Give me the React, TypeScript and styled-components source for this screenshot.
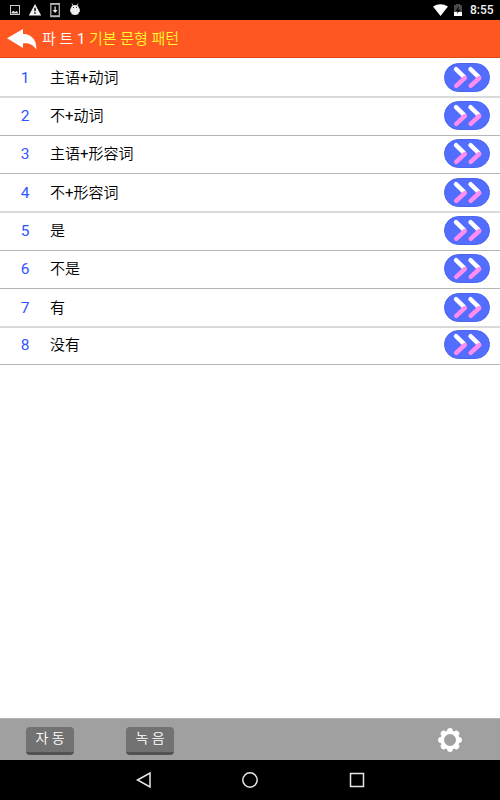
import React from 'react';
import styled, { createGlobalStyle } from 'styled-components';

const Global = createGlobalStyle`
  * { box-sizing: border-box; }
  body { margin: 0; background: #fff; }
`;

const Screen = styled.div`
  width: 500px;
  height: 800px;
  display: flex;
  flex-direction: column;
  overflow: hidden;
  background: #fff;
  font-family: Roboto, 'Noto Sans CJK KR', sans-serif;
`;

const StatusBar = styled.div`
  height: 20px;
  flex: none;
  display: flex;
  justify-content: space-between;
  background: #000;
`;

const StatusIcons = styled.svg`
  display: block;
  height: 20px;
`;

const StatusRight = styled.div`
  display: flex;
  padding-right: 6px;
`;

const Clock = styled.span`
  width: 24px;
  color: #f4f4f4;
  font-size: 12px;
  font-weight: 500;
  line-height: 21px;
  white-space: nowrap;
`;

const Header = styled.header`
  height: 38px;
  flex: none;
  display: flex;
  align-items: flex-start;
  padding-left: 6px;
  background: #ff5722;
  border-bottom: 1px solid #e04a18;
`;

const BackIcon = styled.svg`
  width: 32px;
  height: 37px;
  flex: none;
`;

const Title = styled.h1`
  margin: 0 0 0 4px;
  color: #fff;
  font-size: 15px;
  font-weight: 350;
  line-height: 39px;
  white-space: pre;
`;

const Accent = styled.span`
  color: #fff92e;
`;

const Latin = styled.span`
  font-weight: 400;
`;

const List = styled.ul`
  margin: 0;
  padding: 0;
  list-style: none;
  flex: 1;
`;

const Row = styled.li<{ $height: number; $top: number; $soft?: boolean }>`
  height: ${p => p.$height}px;
  display: flex;
  align-items: flex-start;
  padding: ${p => p.$top}px 10px 0 0;
  border-bottom: ${p => (p.$soft ? '2px solid #dadada' : '1px solid #b5b5b5')};
`;

const Num = styled.span`
  width: 50px;
  color: #3055ff;
  font-size: 15.5px;
  font-weight: 400;
  line-height: 30px;
  text-align: center;
`;

const Pattern = styled.span`
  flex: 1;
  color: #000;
  font-family: Roboto, 'Noto Sans CJK SC', sans-serif;
  font-size: 15px;
  font-weight: 350;
  line-height: 30px;
`;

const GoButton = styled.button`
  width: 46px;
  height: 29px;
  padding: 0;
  border: 1px solid #4a66ee;
  border-radius: 15px;
  background: #536dfe;
`;

const Chevrons = styled.svg`
  display: block;
  width: 44px;
  height: 27px;
`;

const Toolbar = styled.footer`
  height: 42px;
  flex: none;
  display: flex;
  align-items: flex-start;
  gap: 52px;
  padding: 8px 38px 0 26px;
  background: #a0a0a0;
  border-top: 1px solid #b4b4b4;
`;

const ToolButton = styled.button`
  width: 48px;
  height: 28px;
  padding: 0 0 3px;
  border: 0;
  border-bottom: 3px solid #525252;
  border-radius: 4px;
  background: #727272;
  color: #fff;
  font: 350 14px/20px Roboto, 'Noto Sans CJK KR', sans-serif;
  text-align: center;
  white-space: nowrap;
`;

const GearIcon = styled.svg`
  width: 24px;
  height: 24px;
  margin: 1px 0 0 auto;
`;

const NavBar = styled.nav`
  height: 40px;
  flex: none;
  display: flex;
  justify-content: center;
  gap: 83px;
  background: #000;
`;

const NavIcon = styled.svg`
  width: 24px;
  height: 40px;
  fill: none;
  stroke: #e8e8e8;
  stroke-width: 1.5;
`;

const rows = [
  { parts: ['主语', '动词'], height: 40, top: 5, soft: true },
  { parts: ['不', '动词'], height: 38, top: 3 },
  { parts: ['主语', '形容词'], height: 38, top: 3 },
  { parts: ['不', '形容词'], height: 39, top: 4, soft: true },
  { parts: ['是'], height: 38, top: 3 },
  { parts: ['不是'], height: 38, top: 3 },
  { parts: ['有'], height: 39, top: 4, soft: true },
  { parts: ['没有'], height: 37, top: 2 },
];

const petals = [0, 45, 90, 135, 180, 225, 270, 315];

function Notifications() {
  return (
    <StatusIcons width="90" viewBox="0 0 90 20">
      <rect x="10.5" y="5.5" width="9" height="9" fill="none" stroke="#ccc" />
      <path d="M11.5 13.5 V12 L13.5 10.8 L15 12 L16.8 11 L18.5 13.5Z" fill="#ddd" />
      <path d="M35 4 L41.2 15.5 H28.8Z" fill="#f2f2f2" />
      <path d="M35 7.7 V11.2 M35 12.3 V13.7" stroke="#000" strokeWidth="1.4" />
      <rect x="50.8" y="3.6" width="8.5" height="13" fill="none" stroke="#bbb" strokeWidth="1.2" />
      <path d="M50.5 4 H59.5 M50.5 16 H59.5" stroke="#bbb" strokeWidth="1.4" />
      <path d="M54.5 6.5 H55.7 V10 H57.6 L55.1 13 L52.6 10 H54.5Z" fill="#eee" />
      <path d="M71 8.5 Q71 5.2 75 5 Q79 5.2 79 8.5 V12 Q79 15 75 15 Q71 15 71 12Z" fill="#eee" />
      <path d="M72 3.5 L73 6 M78 3.5 L77 6 M70.5 8.5 V12 M79.5 8.5 V12" stroke="#bbb" />
      <path d="M73 7.5h1M76 7.5h1" stroke="#444" />
    </StatusIcons>
  );
}

export default function App() {
  return (
    <>
      <Global />
      <Screen>
        <StatusBar>
          <Notifications />
          <StatusRight>
            <StatusIcons width="40" viewBox="430 0 40 20">
              <path d="M433 6.5 Q440.5 1.8 448 6.5 L440.5 16Z" fill="#fff" />
              <path d="M454 5 H456 V4 H460 V5 H462 V16 H454Z" fill="#4b4b4b" />
              <path d="M454 12 H462 V16 H454Z" fill="#fff" />
              <path d="M458.8 6 L455.8 11 H457.8 L457 14 L460.3 9.7 H458.3Z" fill="#000" />
            </StatusIcons>
            <Clock>8:55</Clock>
          </StatusRight>
        </StatusBar>
        <Header>
          <BackIcon viewBox="6 20 32 37">
            <path d="M7 38.2 L23 29 V34.1 C30 33.7 37 39 36.3 49.5 C33 44.7 28.8 42.9 23 43.4 V48Z" fill="#fff" />
          </BackIcon>
          <Title>파 트 <Latin>1</Latin> <Accent>기본 문형 패턴</Accent></Title>
        </Header>
        <List>
          {rows.map((row, i) => (
            <Row key={i} $height={row.height} $top={row.top} $soft={row.soft}>
              <Num>{i + 1}</Num>
              <Pattern>
                {row.parts[0]}
                {row.parts[1] && <><Latin>+</Latin>{row.parts[1]}</>}
              </Pattern>
              <GoButton aria-label={row.parts.join('+')}>
                <Chevrons viewBox="0 0 44 27" fill="none" strokeWidth="4.4" strokeLinecap="round">
                  <path d="M11 5.2 L19 12.8 M25.5 5.2 L33.5 12.8" stroke="#fff" />
                  <path d="M11.2 21.8 L19.8 14 M25.7 21.8 L34.3 14" stroke="#ff8df0" />
                </Chevrons>
              </GoButton>
            </Row>
          ))}
        </List>
        <Toolbar>
          <ToolButton>자 동</ToolButton>
          <ToolButton>녹 음</ToolButton>
          <GearIcon viewBox="-12 -12 24 24">
            {petals.map(a => (
              <circle key={a} cy="-9" r="2.9" fill="#fff" transform={`rotate(${a})`} />
            ))}
            <circle r="7.8" fill="none" stroke="#fff" strokeWidth="3.6" />
          </GearIcon>
        </Toolbar>
        <NavBar>
          <NavIcon viewBox="0 0 24 40"><path d="M6.5 20 L19 13 V27Z" /></NavIcon>
          <NavIcon viewBox="0 0 24 40"><circle cx="12" cy="20" r="7.2" /></NavIcon>
          <NavIcon viewBox="0 0 24 40"><rect x="5.5" y="13.5" width="13" height="13" /></NavIcon>
        </NavBar>
      </Screen>
    </>
  );
}
